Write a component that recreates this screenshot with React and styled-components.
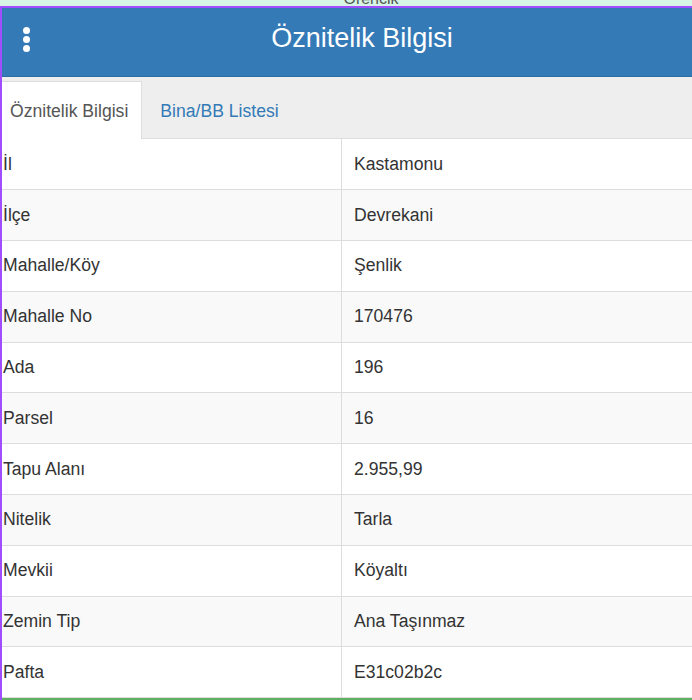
import styled, { createGlobalStyle } from "styled-components";

const rows = [
  ["İl", "Kastamonu"],
  ["İlçe", "Devrekani"],
  ["Mahalle/Köy", "Şenlik"],
  ["Mahalle No", "170476"],
  ["Ada", "196"],
  ["Parsel", "16"],
  ["Tapu Alanı", "2.955,99"],
  ["Nitelik", "Tarla"],
  ["Mevkii", "Köyaltı"],
  ["Zemin Tip", "Ana Taşınmaz"],
  ["Pafta", "E31c02b2c"],
];

const GlobalStyle = createGlobalStyle`
  html, body {
    margin: 0;
    padding: 0;
    background: #fff;
    overflow: hidden;
  }
  body {
    font-family: "Liberation Sans", Arial, sans-serif;
    color: #333;
  }
`;

export default function App() {
  return (
    <Page>
      <GlobalStyle />
      <MapStrip>
        <MapLabel>Orencik</MapLabel>
      </MapStrip>
      <Panel>
        <Header>
          <MenuButton aria-label="menu">
            <Dot />
            <Dot />
            <Dot />
          </MenuButton>
          <Title>Öznitelik Bilgisi</Title>
        </Header>
        <Tabs>
          <Tab $active>Öznitelik Bilgisi</Tab>
          <Tab>Bina/BB Listesi</Tab>
        </Tabs>
        <Table>
          <tbody>
            {rows.map(([label, value], i) => (
              <Row key={label} $striped={i % 2 === 1}>
                <Label>{label}</Label>
                <Value>{value}</Value>
              </Row>
            ))}
          </tbody>
        </Table>
        <Footer />
      </Panel>
    </Page>
  );
}

const Page = styled.div`
  width: 692px;
  height: 700px;
  display: flex;
  flex-direction: column;
  overflow: hidden;
`;

const MapStrip = styled.div`
  height: 6px;
  flex-shrink: 0;
  background: #d6f5e4;
  overflow: hidden;
  display: flex;
  justify-content: center;
`;

const MapLabel = styled.span`
  font-size: 16px;
  line-height: 16px;
  margin-top: -9px;
  margin-left: 50px;
  color: #555;
`;

const Panel = styled.div`
  flex: 1;
  display: flex;
  flex-direction: column;
  border-top: 2px solid #a04cff;
  border-left: 2px solid #a04cff;
  background: #fff;
  min-height: 0;
`;

const Header = styled.header`
  height: 68px;
  flex-shrink: 0;
  background: #337ab7;
  display: flex;
  align-items: center;
  padding: 0 20px 0 18px;
  border-bottom: 1px solid #2e6da4;
`;

const MenuButton = styled.div`
  width: 12px;
  display: flex;
  flex-direction: column;
  align-items: center;
  gap: 2px;
  margin-top: -6px;
`;

const Dot = styled.span`
  width: 7px;
  height: 7px;
  border-radius: 50%;
  background: #fff;
`;

const Title = styled.h1`
  flex: 1;
  margin: -7px 0 0;
  padding-left: 20px;
  text-align: center;
  color: #fff;
  font-weight: normal;
  font-size: 27px;
`;

const Tabs = styled.nav`
  height: 57px;
  flex-shrink: 0;
  padding-top: 4px;
  background: #eee;
  display: flex;
  align-items: stretch;
  border-bottom: 1px solid #ddd;
`;

const Tab = styled.div`
  display: flex;
  align-items: center;
  padding: 2px ${(p) => (p.$active ? "13px" : "18px")} 0 ${(p) => (p.$active ? "8px" : "18px")};
  font-size: 17.6px;
  color: ${(p) => (p.$active ? "#555" : "#337ab7")};
  background: ${(p) => (p.$active ? "#fff" : "transparent")};
  border: 1px solid ${(p) => (p.$active ? "#ddd" : "transparent")};
  border-left: none;
  border-bottom: none;
  margin-bottom: -1px;
`;

const Table = styled.table`
  width: 100%;
  flex-shrink: 0;
  border-collapse: collapse;
  font-size: 17.6px;
`;

const Row = styled.tr`
  height: 50.8px;
  background: ${(p) => (p.$striped ? "#f9f9f9" : "#fff")};
  border-bottom: 1px solid #ddd;
`;

const Label = styled.td`
  width: 338px;
  padding: 0 0 0 1px;
  border-right: 1px solid #ddd;
  color: #333;
  vertical-align: middle;
`;

const Value = styled.td`
  padding: 0 12px;
  color: #333;
  vertical-align: middle;
`;

const Footer = styled.div`
  margin-top: auto;
  height: 3px;
  flex-shrink: 0;
  background: #5fb061;
`;
